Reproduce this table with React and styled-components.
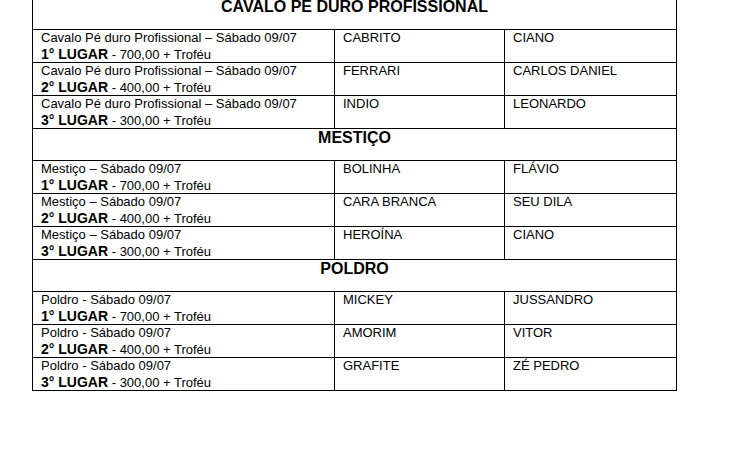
import styled, { createGlobalStyle } from "styled-components";

const GlobalStyle = createGlobalStyle`
  html, body {
    margin: 0;
    padding: 0;
    background: #ffffff;
  }
  body {
    font-family: "Liberation Sans", Arial, sans-serif;
    color: #000;
  }
`;

const Page = styled.div`
  padding: 0 0 0 32px;
  margin-top: -3px;
`;

const Table = styled.table`
  width: 644px;
  border-collapse: collapse;
  table-layout: fixed;
`;

const SectionRow = styled.tr`
  height: 32px;
`;

const SectionCell = styled.td`
  border: 1px solid #000;
  padding: 0;
  vertical-align: top;
  text-align: center;
  font-size: 16px;
  line-height: 18px;
  font-weight: bold;
`;

const EntryRow = styled.tr`
  height: 33px;
`;

const Cell = styled.td`
  border: 1px solid #000;
  padding: 0 4px 0 8px;
  vertical-align: top;
  font-size: 13px;
  line-height: 16px;
  white-space: nowrap;
  overflow: hidden;
`;

const Line = styled.div`
  height: 16px;
`;

const Place = styled.span`
  font-weight: bold;
  font-size: 14px;
`;

const sections = [
  {
    title: "CAVALO PE DURO PROFISSIONAL",
    event: "Cavalo Pé duro Profissional – Sábado 09/07",
    rows: [
      ["CABRITO", "CIANO"],
      ["FERRARI", "CARLOS DANIEL"],
      ["INDIO", "LEONARDO"],
    ],
  },
  {
    title: "MESTIÇO",
    event: "Mestiço – Sábado 09/07",
    rows: [
      ["BOLINHA", "FLÁVIO"],
      ["CARA BRANCA", "SEU DILA"],
      ["HEROÍNA", "CIANO"],
    ],
  },
  {
    title: "POLDRO",
    event: "Poldro - Sábado 09/07",
    rows: [
      ["MICKEY", "JUSSANDRO"],
      ["AMORIM", "VITOR"],
      ["GRAFITE", "ZÉ PEDRO"],
    ],
  },
];

const prizes = ["700,00", "400,00", "300,00"];

const App = () => {
  return (
    <Page>
      <GlobalStyle />
      <Table>
        <colgroup>
          <col style={{ width: "302px" }} />
          <col style={{ width: "170px" }} />
          <col style={{ width: "172px" }} />
        </colgroup>
        <tbody>
          {sections.map((section) => (
            <>
              <SectionRow key={section.title}>
                <SectionCell colSpan={3}>{section.title}</SectionCell>
              </SectionRow>
              {section.rows.map((row, i) => (
                <EntryRow key={section.title + i}>
                  <Cell>
                    <Line>{section.event}</Line>
                    <Line>
                      <Place>{i + 1}° LUGAR</Place> - {prizes[i]} + Troféu
                    </Line>
                  </Cell>
                  <Cell>{row[0]}</Cell>
                  <Cell>{row[1]}</Cell>
                </EntryRow>
              ))}
            </>
          ))}
        </tbody>
      </Table>
    </Page>
  );
};

export default App;
